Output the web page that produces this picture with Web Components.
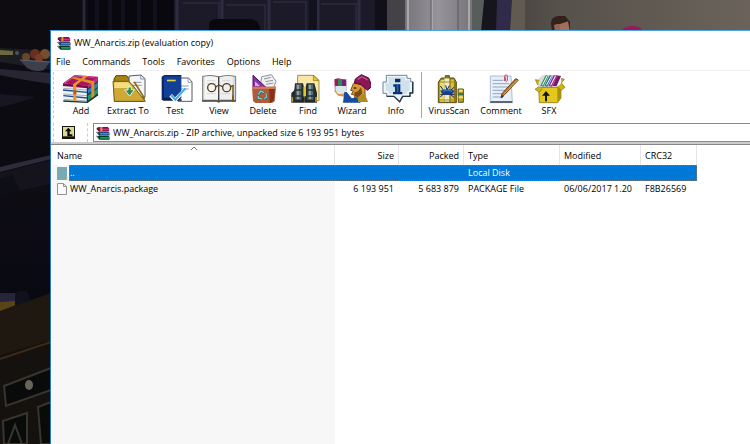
<!DOCTYPE html>
<html lang="en"><head><meta charset="utf-8"><title>WW_Anarcis.zip (evaluation copy)</title>
<style>
html,body{height:100%}
body{margin:0;background:#0d0c14;overflow:hidden;color:#000;font:9px/14px "Open Sans","Noto Sans",sans-serif}
</style></head><body>
<desk-top>
 <archive-window heading="WW_Anarcis.zip (evaluation copy)">
  <menu-bar slot="menu"></menu-bar>
  <tool-bar slot="tools">
   <tool-button icon="add" style="--w:46px">Add</tool-button>
   <tool-button icon="extract" style="--w:48px">Extract To</tool-button>
   <tool-button icon="test" style="--w:46px">Test</tool-button>
   <tool-button icon="view" style="--w:42px">View</tool-button>
   <tool-button icon="delete" style="--w:46px">Delete</tool-button>
   <tool-button icon="find" style="--w:44px">Find</tool-button>
   <tool-button icon="wizard" style="--w:44px">Wizard</tool-button>
   <tool-button icon="info" style="--w:44px">Info</tool-button>
   <tool-separator></tool-separator>
   <tool-button icon="virus" style="--w:50px">VirusScan</tool-button>
   <tool-button icon="comment" style="--w:54px">Comment</tool-button>
   <tool-button icon="sfx" style="--w:42px">SFX</tool-button>
  </tool-bar>
  <address-bar slot="address" value="WW_Anarcis.zip - ZIP archive, unpacked size 6 193 951 bytes"></address-bar>
  <file-list></file-list>
 </archive-window>
</desk-top>
<script>
const BOOKS=`<svg viewBox="0 0 42 40" width="14" height="13" aria-hidden="true"><path d="M2 2L9 0H36L40 5V13H8L2 7Z" fill="#8a0d48"/><path d="M11 5H39V10H11Z" fill="#d52a86"/><path d="M4 14H37L41 18V26H9Z" fill="#173a78"/><path d="M12 18H40V23H12Z" fill="#3693ce"/><path d="M4 27H37L41 30V39H10Z" fill="#04361f"/><path d="M12 31H40V36H12Z" fill="#17a765"/><path d="M2 5L10 13M1 15L10 26M1 27L10 38" stroke="#222" stroke-width="3"/><path d="M3 10L9 16M3 21L9 28M3 33L9 39" stroke="#ddd" stroke-width="2"/><path d="M13 0H19V13H13Z" fill="#d99a2c"/></svg>`;
const ICONS={
add:`<path d="M3 29L76 36V84L4 80Z" fill="#eef1f6"/><path d="M76 36L108 9V62L76 84Z" fill="#252c50"/>
<path d="M3 28L38 3L108 8L76 36Z" fill="#a81462"/><path d="M8 27L40 6L98 10" fill="none" stroke="#d2559a" stroke-width="3"/>
<path d="M3 28L76 35V43L3 36Z" fill="#7d0b49"/><path d="M76 35L108 8V21L76 44Z" fill="#bd2b80"/>
<path d="M76 48L108 25V39L76 61Z" fill="#1c83c6"/><path d="M76 66L108 42V58L76 82Z" fill="#179a62"/>
<path d="M3 48L76 55M4 65L76 72" stroke="#1e4f91" stroke-width="4"/><path d="M4 43L75 48M4 60L75 65M5 76L75 81" stroke="#aab2c4" stroke-width="3"/><path d="M4 81L76 85L108 62" fill="none" stroke="#16352c" stroke-width="4"/><path d="M76 36V84" stroke="#20223d" stroke-width="3"/>
<path d="M33 31L68 5L78 6L43 33V82L34 81Z" fill="#e7952c"/><path d="M28 13L38 9L97 22V66L88 73V29Z" fill="#e08c27"/><path d="M34 48L43 49V61L34 60Z" fill="#b26016"/>`,
extract:`<path d="M15 15L21 5H53L60 14H105V82H17Z" fill="#a98212" stroke="#54440f" stroke-width="3"/><path d="M60 6L96 3L108 14V69L62 70Z" fill="#f3f5f8" stroke="#545b65" stroke-width="3"/><path d="M95 4V15H107M72 25H97M72 34H98" fill="none" stroke="#8c96a5" stroke-width="3"/><path d="M12 22H58L68 30L109 82H16Z" fill="#cfa935" stroke="#745b13" stroke-width="3"/><path d="M16 25H57L63 31L70 42H16Z" fill="#f3dd80"/><path d="M76 24L107 74" stroke="#8e6c16" stroke-width="5"/><path d="M57 39H67V47H76L62 66L47 48H57Z" fill="#2e8e45" stroke="#e9eee6" stroke-width="3"/>`,
test:`<path d="M66 12H98L108 24V82H66Z" fill="#fff" stroke="#555c67" stroke-width="3"/><path d="M96 12V25H107M75 36H98M75 45H98" fill="none" stroke="#929dab" stroke-width="3"/><path d="M17 8L25 3H76V72L70 78H17Z" fill="#0a2568"/><path d="M24 7H75V71H24Z" fill="#123f97"/><path d="M24 72L77 76V80H20Z" fill="#101d43"/><path d="M33 17H59V22H33Z" fill="#e7d342"/><path d="M44 64L57 78L87 47" fill="none" stroke="#fff" stroke-width="11"/><path d="M45 63L58 77L88 43" fill="none" stroke="#3ea9ef" stroke-width="6"/>`,
view:`<path d="M8 7Q32 1 57 8Q82 1 107 7V79H8Z" fill="#d8dadd" stroke="#777" stroke-width="3"/><path d="M14 8Q38 4 55 12V76H13Z" fill="#f5f5f4"/><path d="M59 12Q79 3 98 8V75H59Z" fill="#eee"/><path d="M56 9V80M6 81H50L56 84L62 81H108" fill="none" stroke="#444" stroke-width="4"/><path d="M21 20H46M21 29H48M68 20H91M20 59H48M66 59H90" stroke="#c8c8c8" stroke-width="2"/><g fill="none" stroke="#534018" stroke-width="4"><circle cx="35" cy="41" r="12"/><circle cx="80" cy="41" r="12"/><path d="M47 39Q58 29 68 39M91 38L99 35V66"/></g><path d="M96 64H102V84H96Z" fill="#6c541c"/><path d="M99 36V80" stroke="#c39e38" stroke-width="2" stroke-dasharray="4 3"/>`,
delete:`<path d="M53 8L82 2L96 22L88 42H48Z" fill="#eef0f3" stroke="#8d929b" stroke-width="3"/><path d="M60 15L80 10M64 23L87 19M66 31L88 27" stroke="#8d929b" stroke-width="3"/><path d="M27 4L69 43H27Z" fill="#8731b3" stroke="#48115f" stroke-width="3"/><path d="M33 22L48 36H33Z" fill="#d7abeb"/><path d="M24 38H96L92 82L84 87H34L27 81Z" fill="#b45a38"/><path d="M75 43H93L89 81L77 86Z" fill="#843318"/><path d="M24 38H96V45H25Z" fill="#d17b55"/><path d="M43 62L50 52L60 57M66 59L69 68L61 75M53 76L42 73L43 66" fill="none" stroke="#216f78" stroke-width="8"/><path d="M43 61L50 51L60 56M66 59L68 68L61 74M53 75L42 72L43 66" fill="none" stroke="#7ecfd0" stroke-width="4"/>`,
find:`<path d="M26 4H74L90 19V80H26Z" fill="#f9e7aa" stroke="#a78e43" stroke-width="3"/><path d="M73 4L90 20H73Z" fill="#e8c51b" stroke="#8c7212" stroke-width="2"/><path d="M18 28H42L47 51V86H7V57L16 49Z" fill="#25292b"/><path d="M53 28H76L84 57V86H47V50Z" fill="#25292b"/><path d="M21 31H37V77H19ZM57 31H73V77H55Z" fill="#53686a"/><path d="M25 33H29V75H25ZM61 33H65V75H61Z" fill="#aebcbc"/><path d="M16 48H80M8 66H42M50 66H84" stroke="#25302f" stroke-width="4"/><path d="M43 39H51V67H43Z" fill="#e8c51b"/><path d="M10 70V83M81 69V84" stroke="#b99a29" stroke-width="5"/>`,
wizard:`<path d="M4 16L16 13L30 16V54H6Z" fill="#a71558"/><path d="M15 15H27V51H15Z" fill="#248c5b"/><path d="M27 16H40V50H27Z" fill="#722172"/><path d="M7 36H40V55L21 59L7 52Z" fill="#dce5ee"/><path d="M2 48L18 60L37 58L36 68L15 65Z" fill="#d9963d"/><path d="M61 29L84 22L96 43V72H65L65 63L55 61L61 51L53 49Z" fill="#d99734" stroke="#775018" stroke-width="3"/><path d="M63 56L75 52L84 40L88 58L76 71L66 66Z" fill="#794c18"/><path d="M62 42H70" stroke="#271f1a" stroke-width="4"/><path d="M67 15L85 2L107 12L117 37L103 49L84 32L64 27Z" fill="#8b1558" stroke="#4e0c31" stroke-width="3"/><path d="M74 16L87 8L104 18" fill="none" stroke="#c35490" stroke-width="4"/><path d="M34 54L41 54L56 73L75 70L83 86H30Z" fill="#174aa0"/><path d="M73 70L95 58L105 84H76Z" fill="#b18b23"/>`,
info:`<path d="M28 4H90V13H101V23H108V56H99V67H77L68 85L51 67H29V58H18V24H28Z" fill="#eff4f8" stroke="#6d8798" stroke-width="3"/><path d="M31 65V67H51L68 83L77 67H99V57H107V24" fill="none" stroke="#233948" stroke-width="4"/><path d="M34 10H84V19H98V52H90V59H35V50H26V28H35Z" fill="#cfe1ea"/><path d="M54 14H70V25H54ZM49 31H70V54H76V61H48V54H54V38H49Z" fill="#092d72"/><path d="M59 32H64V55H59Z" fill="#2368ad"/>`,
virus:`<path d="M46 5H58V12H72L79 24V86H25V24L34 12H46Z" fill="#8c7721" stroke="#5e5010" stroke-width="3"/><path d="M34 17H42V83H29V24Z" fill="#e6dc62"/><path d="M62 16H72V83H62Z" fill="#d5c13a"/><path d="M43 13H58V83H43Z" fill="#ececcd"/><path d="M28 24H77M27 78H78" stroke="#a08b1d" stroke-width="3"/><path d="M84 45H100V85H85Z" fill="#bba02a" stroke="#5b4d13" stroke-width="3"/><path d="M87 50H98M86 70H99" stroke="#f4e763" stroke-width="6"/><path d="M84 60H102" stroke="#31784f" stroke-width="6"/><path d="M31 36L40 48M31 51H73M31 69L42 58M47 34L51 48L58 35M72 40L61 50M73 61H31M72 70L60 60" fill="none" stroke="#102456" stroke-width="3"/><ellipse cx="52" cy="54" rx="19" ry="8" fill="#183e8c"/><path d="M39 52Q52 46 66 52" fill="none" stroke="#3775c8" stroke-width="4"/>`,
comment:`<path d="M25 6H87L91 86H25Z" fill="#e6effa" stroke="#8ba0bb" stroke-width="2"/><path d="M26 81H91V87H24Z" fill="#5d6570"/><path d="M32 19H64M32 29H82M32 39H82M32 49H76M32 59H65M32 69H63" stroke="#8ea6c5" stroke-width="3"/><path d="M68 21V7Q68 2 73 3Q78 4 76 10V20Q73 25 70 20V10" fill="none" stroke="#d43755" stroke-width="3"/><path d="M109 18L66 64L57 72L60 59L101 14Z" fill="#b57127" stroke="#694116" stroke-width="3"/><path d="M106 18L65 61" stroke="#e3ad5e" stroke-width="3"/><path d="M57 72L60 63L65 68Z" fill="#222"/>`,
sfx:`<path d="M20 28L28 11L39 3H92L80 41L28 48Z" fill="#d7dce1"/><path d="M31 35L47 4L56 5L40 38Z" fill="#239a56"/><path d="M43 36L59 4L68 5L52 38Z" fill="#2668af"/><path d="M55 36L71 4L83 4L66 38Z" fill="#a12c8b"/><path d="M68 36L82 5L93 6L80 36Z" fill="#731966"/><path d="M37 34L52 5M49 34L65 5M62 34L77 5" stroke="#fff" stroke-width="3"/><path d="M26 40H84L93 30V72L83 86H28Z" fill="#e4c91c" stroke="#776408" stroke-width="2"/><path d="M82 42L93 32V72L82 85Z" fill="#ac900e"/><path d="M26 38L15 46L28 55L37 44M82 38L93 49L105 40L94 27M28 19L16 17L24 33M93 13L103 16L94 27" fill="#d0b413" stroke="#81700d" stroke-width="2"/><path d="M48 51L60 65H51V82H45V65H36Z" fill="#191507"/>`
};
function define(name,html){customElements.define(name,class extends HTMLElement{connectedCallback(){if(this.shadowRoot)return;const t=document.createElement('template');t.innerHTML=typeof html==='function'?html(this):html;this.attachShadow({mode:'open'}).append(t.content.cloneNode(true));}})}
define('desk-scene',`<style>:host{display:block}svg{display:block;width:100%;height:100%}</style>
<svg viewBox="0 0 750 444" preserveAspectRatio="xMinYMin slice" aria-hidden="true">
<defs><linearGradient id="w"><stop stop-color="#49443f"/><stop offset=".2" stop-color="#56514b"/><stop offset="1" stop-color="#6b635b"/></linearGradient><linearGradient id="d"><stop stop-color="#77757a"/><stop offset=".5" stop-color="#96949a"/><stop offset="1" stop-color="#77757a"/></linearGradient><linearGradient id="b" x2="0" y2="1"><stop stop-color="#0e0d14"/><stop offset="1" stop-color="#090911"/></linearGradient></defs>
<path d="M0 0H750V444H0Z" fill="#0d0c14"/><path d="M0 0H84V50H0Z" fill="#0f0c11"/><path d="M84 0V32" stroke="#292635" stroke-width="3"/><path d="M88 0H174V32H88Z" fill="#09080e"/><path d="M97 0V32M110 0V32M123 0V32M139 0V32M155 0V32" stroke="#12111b" stroke-width="4"/>
<path d="M174 0H375V32H174Z" fill="#1c1a29"/><path d="M177 0V32M222 0V32M269 0V32M318 0V32M359 0V32" stroke="#2e2b40" stroke-width="3"/><path d="M183 3H219V32M226 5H265V32M273 2H306V32M321 4H356V32" fill="none" stroke="#282537" stroke-width="2"/><path d="M309 0H317V32H309Z" fill="#12111e"/><path d="M209 32V24Q210 19 218 19H250Q259 20 260 28V32Z" fill="#09090d"/>
<path d="M375 0H387V32H375Z" fill="#111019"/><path d="M387 0H407V32H387Z" fill="#444247"/><path d="M405 0H472V32H405Z" fill="url(#d)"/><path d="M408 0V32M432 0V32M469 0V32" stroke="#aaa7ac" stroke-width="2"/><path d="M431 0V32M458 0V32" stroke="#5a585d"/><path d="M472 0H484V32H472Z" fill="#575d5b"/><path d="M484 0L481 32H497V0Z" fill="#16141d"/><path d="M497 0H512L510 32H496Z" fill="#302b49"/><path d="M512 0H750V32H510Z" fill="url(#w)"/><path d="M512 0H525V32H510Z" fill="#605a51"/>
<path d="M552 32L551 23Q551 17 558 16H565L570 22V32Z" fill="#34211c"/><path d="M560 23L568 21L570 32H559Z" fill="#a16f5c"/><path d="M554 25L560 23V32H555Z" fill="#946451"/><path d="M552 24L554 18L562 16L569 21L560 24Z" fill="#34211c"/><path d="M620 32Q623 26 633 26Q642 26 642 32Z" fill="#9b165c"/>
<path d="M0 48L52 51V70L0 62Z" fill="#1c1d23"/><path d="M0 50L13 51V55H0Z" fill="#6e683d"/><circle cx="17" cy="53" r="2" fill="#4d5359"/><circle cx="26" cy="57" r="4" fill="#684627"/><circle cx="35" cy="54" r="5" fill="#653020"/><circle cx="45" cy="54" r="5" fill="#74502a"/><circle cx="39" cy="58" r="4" fill="#7a3c22"/><path d="M20 60L50 62L44 70Q35 73 27 68Z" fill="#3d3f4d"/><path d="M20 60L50 62" stroke="#62626f" stroke-width="1"/>
<path d="M0 69L51 73V86L0 75Z" fill="#282632"/><path d="M0 76L51 84V155L0 165Z" fill="#0c0b12"/><path d="M0 94L36 97L10 105L0 107Z" fill="#171621"/><path d="M0 167L51 155V159L0 172Z" fill="#2e2b3a"/><path d="M0 173L51 160V184L0 195Z" fill="#15141d"/><path d="M0 179L12 174L20 191L0 208Z" fill="#0e0e16"/>
<path d="M0 195L51 184V300H0Z" fill="url(#b)"/><path d="M0 293H15L26 296V305L0 311Z" fill="#262438"/><path d="M0 302L15 301V305L0 312Z" fill="#594319"/><path d="M15 305V294Q17 289 27 291L30 299L22 307Z" fill="#11101d"/><path d="M0 311L51 293V444H0Z" fill="#1f1811"/><path d="M0 355L51 340V444H0Z" fill="#14110e"/><path d="M0 359L51 342" stroke="#3d2a18" stroke-width="2"/>
<g fill="#090b0b" stroke="#38352e" stroke-width="2"><path d="M4 386L51 368V390L6 406Z"/><path d="M3 421L27 413V444H4Z"/><path d="M38 407L51 402V444H41Z"/><path d="M8 444L15 425L22 444" fill="none"/></g><ellipse cx="29" cy="385" rx="4" ry="5" fill="#69645a"/></svg>`);
define('desk-top',`<style>:host{display:grid;height:100%;overflow:hidden}desk-scene,.front{grid-area:1/1;min-width:0;min-height:0}.front{display:grid;padding:30px 0 0 50px}</style><desk-scene></desk-scene><div class="front"><slot></slot></div>`);
define('archive-window',e=>`<style>:host{display:flex;flex-direction:column;min-width:0;min-height:0;background:#fff;border-top:1px solid #4fa3e0;border-left:1px solid #2a78c0;z-index:1}
header{display:flex;align-items:center;gap:3px;padding:3px 6px 2px;height:18px}h1{font:inherit;margin:0}.tools{border-top:1px solid #f0f0f0;padding-left:2px}</style>
<header>${BOOKS}<h1>${e.getAttribute('heading')}</h1></header><slot name="menu"></slot><div class="tools"><slot name="tools"></slot><slot name="address"></slot></div><slot></slot>`);
define('menu-bar',`<style>:host{display:block;padding:1px 5px 0}nav{display:flex;gap:12px}button{font:inherit;color:inherit;background:none;border:0;padding:0 0 1px}</style><nav>${['File','Commands','Tools','Favorites','Options','Help'].map(x=>`<button>${x}</button>`).join('')}</nav>`);
define('tool-bar',`<style>:host{display:flex;align-items:stretch;height:46px;border-left:1px dashed #ccc;margin:1px 0 2px;padding-left:4px}</style><slot></slot>`);
define('tool-separator',`<style>:host{display:block;flex:none;width:1px;margin:0 2px 0 3px;background:#a5a5a5}</style>`);
define('tool-button',e=>`<style>:host{display:block;flex:none;width:var(--w)}button{display:flex;flex-direction:column;align-items:center;width:100%;padding:2px 0 0;border:0;background:none;font:inherit;color:inherit;white-space:nowrap}svg{display:block}</style><button><svg width="38" height="30" viewBox="0 0 114 90" aria-hidden="true">${ICONS[e.getAttribute('icon')]}</svg><slot></slot></button>`);
define('address-bar',e=>`<style>:host{display:flex;align-items:stretch;height:19px;padding:3px 0 0}.up{display:flex;align-items:center;width:34px;padding:0 0 0 8px;border:0;border-left:1px dashed #ccc;background:none;box-sizing:border-box}label{flex:1;display:flex;min-width:0;border-left:1px dashed #ccc;padding-left:5px}.box{display:flex;align-items:center;gap:3px;flex:1;min-width:0;border:1px solid #8a8a8a;border-right:0;padding:1px 0 0 2px;box-sizing:border-box;height:19px}input{flex:1;min-width:0;border:0;padding:0;background:none;outline:0;font:inherit;color:inherit}</style>
<button class="up" aria-label="Up one level"><svg width="13" height="13" viewBox="0 0 39 39"><path d="M0 0H39V39H0Z" fill="#151509"/><path d="M3 3H36V31H3Z" fill="#dcd996"/><path d="M19 5L29 16H23V25H31V31H16V16H9Z" fill="#090909"/></svg></button><label aria-label="Archive path"><span class="box">${BOOKS}<input readonly value="${e.getAttribute('value')}"></span></label>`);
define('file-list',`<style>:host{display:flex;flex-direction:column;flex:1;min-height:0;border-top:2px solid #ccc;background:linear-gradient(#f7f7f7,#f7f7f7) 1px 20px/283px 100% no-repeat #fff;padding-left:1px}
:host::before{content:"";border-top:1px solid #888;margin-left:-1px}
table{table-layout:fixed;border-collapse:separate;border-spacing:0;width:645px}th,td{font-weight:400;text-align:left;padding:0 0 0 4px;white-space:nowrap}th{height:20px;padding-top:1px;border-right:1px solid #e5e5e5;background:#fff;box-sizing:border-box}th:first-child{position:relative;padding-left:5px}td{height:16px}
th:first-child svg{position:absolute;left:138px;top:1px}.n{text-align:right;padding-left:0;padding-right:5px}th.n{padding-right:4px}.i{padding:0 0 0 5px;line-height:0}td.l{padding-left:1px}
.s td:not(.i){background:#0078d7;color:#fff;height:14px;border:dotted #5d7d94;border-width:1px 0}.s td:last-child{border-right-width:1px}.s td.l{border-left-width:1px;padding-left:0}</style>
<table><colgroup><col style="width:17px"><col style="width:266px"><col style="width:64px"><col style="width:65px"><col style="width:96px"><col style="width:81px"><col style="width:56px"></colgroup>
<thead><tr><th colspan="2">Name<svg width="8" height="4" viewBox="0 0 8 4" aria-hidden="true"><path d="M1 4L4 1L7 4" fill="none" stroke="#777"/></svg></th><th class="n">Size</th><th class="n">Packed</th><th>Type</th><th>Modified</th><th>CRC32</th></tr></thead>
<tbody><tr class="s"><td class="i"><svg width="11" height="14" viewBox="0 0 11 14" aria-hidden="true"><path d="M0 1H10V14H0Z" fill="#78abb1"/><path d="M10 10V14" stroke="#d9c68b"/></svg></td><td class="l">..</td><td></td><td></td><td>Local Disk</td><td></td><td></td></tr>
<tr><td class="i"><svg width="11" height="14" viewBox="0 0 22 28" aria-hidden="true"><path d="M1 3H13L19 9V25H1Z" fill="#fafafa" stroke="#929292" stroke-width="2"/><path d="M13 3V9H19" fill="none" stroke="#929292" stroke-width="2"/></svg></td><td class="l">WW_Anarcis.package</td><td class="n">6 193 951</td><td class="n">5 683 879</td><td>PACKAGE File</td><td>06/06/2017 1.20</td><td>F8B26569</td></tr></tbody></table>`);
</script></body></html>
